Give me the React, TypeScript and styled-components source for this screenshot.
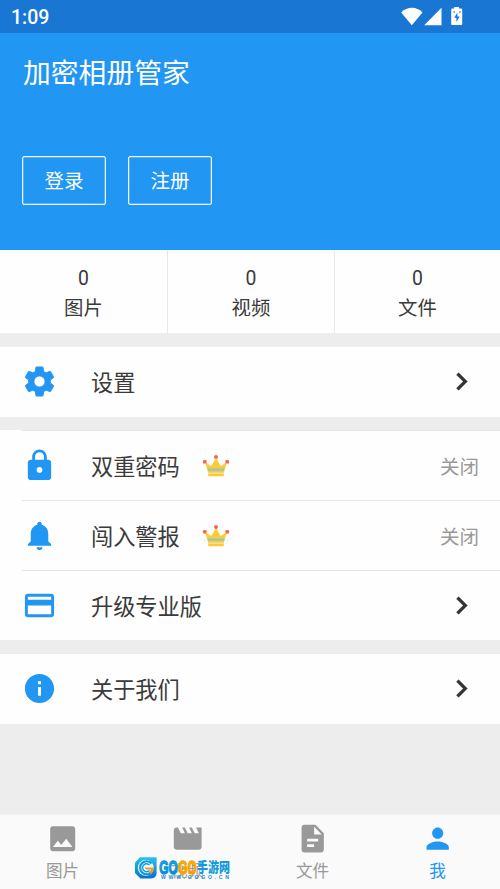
import React from "react";
import styled, { createGlobalStyle } from "styled-components";

const BLUE = "#2196f3";

const GlobalStyle = createGlobalStyle`
  * { box-sizing: border-box; }
  body {
    margin: 0;
    background: #ededed;
    font-family: Roboto, "Noto Sans CJK SC", sans-serif;
    color: #3a3a3a;
  }
`;

const Screen = styled.div`
  position: relative;
  width: 500px;
  height: 889px;
  display: flex;
  flex-direction: column;
  background: #ededed;
  overflow: hidden;
`;

const StatusBar = styled.div`
  height: 33px;
  flex: none;
  display: flex;
  justify-content: space-between;
  background: #1976d2;
  color: #fff;
  padding: 0 36px 0 11px;
`;

const Clock = styled.span`
  font-size: 19.5px;
  font-weight: 500;
  line-height: 35px;
`;

const Header = styled.header`
  height: 217px;
  flex: none;
  background: ${BLUE};
  color: #fff;
  padding: 21px 22px 0;
`;

const Title = styled.h1`
  margin: 0;
  padding-left: 1px;
  font-size: 27.8px;
  line-height: 40px;
  font-weight: 400;
`;

const Actions = styled.div`
  display: flex;
  gap: 22px;
  margin-top: 62px;
`;

const OutlineButton = styled.button`
  width: 84px;
  height: 49px;
  border: 1px solid #eef7fe;
  box-shadow: inset 0 0 0 0.5px rgba(255, 255, 255, 0.5);
  border-radius: 2px;
  background: transparent;
  color: #fff;
  font: 400 19.5px/46px Roboto, "Noto Sans CJK SC", sans-serif;
  padding: 2px 0 0;
`;

const Stats = styled.div`
  display: grid;
  grid-template-columns: 168px 167px 165px;
  height: 83px;
  flex: none;
  background: #fefefe;
  margin-bottom: 14px;
`;

const Stat = styled.div`
  display: flex;
  flex-direction: column;
  align-items: center;
  padding-top: 14px;
  font-size: 19.4px;
  line-height: 30px;
  &:not(:last-child) { border-right: 1px solid #e8e8e8; }
`;

const Group = styled.section<{ $lined?: boolean }>`
  background: #fefefe;
  flex: none;
  margin-bottom: ${(p) => (p.$lined ? 14 : 13)}px;
`;

const Row = styled.div<{ $divider?: boolean }>`
  height: 70px;
  margin-left: 22px;
  padding: 0 21px ${(p) => (p.$divider ? 0 : 1)}px 0;
  display: flex;
  align-items: center;
  border-top: ${(p) => (p.$divider ? "1px solid #e5e5e5" : "0")};
`;

const RowIcon = styled.span`
  display: flex;
  width: 69px;
  color: ${BLUE};
`;

const Label = styled.span`
  padding-top: 2px;
  font-size: 22.2px;
  line-height: 34px;
`;

const Crown = styled.svg`
  display: block;
  margin-left: 22px;
`;

const Trailing = styled.span`
  margin-left: auto;
  display: flex;
  color: #999;
  font-size: 19.5px;
  padding-bottom: 1px;
`;

const Chevron = styled(Trailing)`
  color: #333;
  padding-bottom: 0;
  stroke: #333;
  stroke-width: 0.35px;
`;

const NavBar = styled.nav`
  margin-top: auto;
  height: 74px;
  flex: none;
  display: grid;
  grid-template-columns: repeat(4, 1fr);
  background: #fafafa;
  box-shadow: 0 -1px 0 #f4f4f4;
`;

const NavItem = styled.div<{ $active?: boolean }>`
  display: flex;
  flex-direction: column;
  align-items: center;
  gap: 2px;
  padding-top: 7px;
  font-size: 16.6px;
  line-height: 30px;
  color: ${(p) => (p.$active ? BLUE : "#999")};
`;

const Watermark = styled.svg`
  position: absolute;
  left: 134px;
  top: 855px;
  overflow: visible;
`;

const paths = {
  settings:
    "M19.43 12.98c.04-.32.07-.64.07-.98s-.03-.66-.07-.98l2.11-1.65c.19-.15.24-.42.12-.64l-2-3.46c-.12-.22-.39-.3-.61-.22l-2.49 1c-.52-.4-1.08-.73-1.69-.98l-.38-2.65C14.46 2.18 14.25 2 14 2h-4c-.25 0-.46.18-.49.42l-.38 2.65c-.61.25-1.17.59-1.69.98l-2.49-1c-.23-.09-.49 0-.61.22l-2 3.46c-.13.22-.07.49.12.64l2.11 1.65c-.04.32-.07.65-.07.98s.03.66.07.98l-2.11 1.65c-.19.15-.24.42-.12.64l2 3.46c.12.22.39.3.61.22l2.49-1c.52.4 1.08.73 1.69.98l.38 2.65c.03.24.24.42.49.42h4c.25 0 .46-.18.49-.42l.38-2.65c.61-.25 1.17-.59 1.69-.98l2.49 1c.23.09.49 0 .61-.22l2-3.46c.12-.22.07-.49-.12-.64l-2.11-1.65zM12 15.8c-2.1 0-3.8-1.7-3.8-3.8s1.7-3.8 3.8-3.8 3.8 1.7 3.8 3.8-1.7 3.8-3.8 3.8z",
  lock: "M18 8h-1V6c0-2.76-2.24-5-5-5S7 3.24 7 6v2H6c-1.1 0-2 .9-2 2v10c0 1.1.9 2 2 2h12c1.1 0 2-.9 2-2V10c0-1.1-.9-2-2-2zm-6 9c-1.1 0-2-.9-2-2s.9-2 2-2 2 .9 2 2-.9 2-2 2zm3.1-9H8.9V6c0-1.71 1.39-3.1 3.1-3.1 1.71 0 3.1 1.39 3.1 3.1v2z",
  bell: "M12 22c1.1 0 2-.9 2-2h-4c0 1.1.89 2 2 2zm6-6v-5c0-3.07-1.64-5.64-4.5-6.32V4c0-.83-.67-1.5-1.5-1.5s-1.5.67-1.5 1.5v.68C7.63 5.36 6 7.92 6 11v5l-2 2v1h16v-1l-2-2z",
  card: "M20 4H4c-1.11 0-1.99.89-1.99 2L2 18c0 1.11.89 2 2 2h16c1.11 0 2-.89 2-2V6c0-1.11-.89-2-2-2zm0 14H4v-6h16v6zm0-10H4V6h16v2z",
  info: "M12 2C6.48 2 2 6.48 2 12s4.48 10 10 10 10-4.48 10-10S17.52 2 12 2zm1 15h-2v-6h2v6zm0-8h-2V7h2v2z",
  chevron: "M10 6L8.59 7.41 13.17 12l-4.58 4.59L10 18l6-6z",
  image:
    "M21 19V5c0-1.1-.9-2-2-2H5c-1.1 0-2 .9-2 2v14c0 1.1.9 2 2 2h14c1.1 0 2-.9 2-2zM8.5 13.5l2.5 3.01L14.5 12l4.5 6H5l3.5-4.5z",
  movie:
    "M18 4l2 4h-3l-2-4h-2l2 4h-3l-2-4H8l2 4H7L5 4H4c-1.1 0-1.99.9-1.99 2L2 18c0 1.1.9 2 2 2h16c1.1 0 2-.9 2-2V4h-4z",
  file: "M14 2H6c-1.1 0-1.99.9-1.99 2L4 20c0 1.1.89 2 1.99 2H18c1.1 0 2-.9 2-2V8l-6-6zm2 12H8v-2h8v2zm-3 4H8v-2h5v2zm0-9V3.5L18.500 9H13z",
  person:
    "M12 12c2.21 0 4-1.79 4-4s-1.79-4-4-4-4 1.79-4 4 1.79 4 4 4zm0 2c-2.67 0-8 1.34-8 4v2h16v-2c0-2.66-5.33-4-8-4z",
};

type IconName = keyof typeof paths;

const Icon = ({ name, size = 35 }: { name: IconName; size?: number }) => (
  <svg width={size} height={size} viewBox="0 0 24 24" fill="currentColor">
    <path
      d={paths[name]}
      fillRule="evenodd"
      stroke={name === "settings" ? "currentColor" : undefined}
      strokeWidth={name === "settings" ? 0.6 : undefined}
      strokeLinejoin="round"
    />
  </svg>
);

const CrownIcon = () => (
  <Crown width="28" height="24" viewBox="0 0 28 24">
    <path d="M3 8l6.200 3.900L14 4l4.800 7.900L25 8l-3.400 11.200H6.400z" fill="#ffca38" />
    <path d="M5.300 14.500h17.400l-.7 2.300H6z" fill="#8fcbc5" />
    <path d="M6.500 19h15" stroke="#fff0bd" strokeWidth=".7" />
    <rect x="6.200" y="19.400" width="15.600" height="2.800" rx=".5" fill="#ffca38" />
    <g fill="#f46b40">
      <circle cx="2.800" cy="7.800" r="2" />
      <circle cx="14" cy="2.900" r="2" />
      <circle cx="25.200" cy="7.800" r="2" />
    </g>
  </Crown>
);

const StatusIcons = () => (
  <svg width="64" height="33" viewBox="400 0 64 33" fill="#fff">
    <path d="M401.200 12.400C407.300 6.300 416.400 6.300 422.500 12.400L411.800 25.200z" />
    <path d="M441.500 7.800V25.200H424.200z" />
    <path
      fillRule="evenodd"
      d="M454.200 7h4.800v1.600h2.200q1 0 1 1V24q0 1-1 1h-9q-1 0-1-1V9.600q0-1 1-1h2zM457.400 12.500l-3.200 5.200h2.200v4.300l3.300-5.500h-2.300z"
    />
    <path d="M453.200 11.200l2 .2-1.200 2zM458.800 11.400l2-.2-.7 2.200z" fill="#1976d2" />
  </svg>
);

const SiteMark = () => (
  <Watermark width="98" height="27" viewBox="0 0 98 27">
    <defs>
      <linearGradient id="markBlue" x1="0" y1="0" x2="0" y2="1">
        <stop offset="0" stopColor="#25c4ed" />
        <stop offset="1" stopColor="#0872c9" />
      </linearGradient>
      <linearGradient id="markOrange" x1="0" y1="0" x2="0" y2="1">
        <stop offset="0" stopColor="#ffc400" />
        <stop offset="1" stopColor="#f78b00" />
      </linearGradient>
    </defs>
    <path d="M6 2.300h16.600V18q0 5.400-5.500 5.400H6.500L1 18V7.500z" fill="url(#markBlue)" />
    <circle cx="11.800" cy="12.800" r="8" fill="#e8faff" />
    <path d="M17.500 8.500a6.500 6.500 0 1 0 .2 8.300" fill="none" stroke="#159bdd" strokeWidth="2.200" />
    <path d="M15.500 10a4 4 0 1 0 0 5.500" fill="none" stroke="#159bdd" strokeWidth="1.400" />
    <path d="M10.500 12.500h9.500q0 4-3.500 6.200l-1-2.400q1.600-.7 1.500-1.700h-5z" fill="#f59b18" />
    <g fontFamily='"Liberation Sans", sans-serif' fontWeight="700" fontSize="19" strokeWidth="1.300">
      <text x="25.200" y="18.600" textLength="18.500" lengthAdjust="spacingAndGlyphs" fill="url(#markBlue)" stroke="#0c94db">GO</text>
      <text x="44.500" y="18.600" textLength="18" lengthAdjust="spacingAndGlyphs" fill="url(#markOrange)" stroke="#faa500">GO</text>
    </g>
    <text x="63" y="17" textLength="33" lengthAdjust="spacingAndGlyphs" fontFamily='"Noto Sans CJK SC", sans-serif' fontWeight="900" fontSize="14" fill="#149bdc">手游网</text>
    <text x="27" y="24.100" textLength="68" fontFamily='"Liberation Sans", sans-serif' fontWeight="700" fontSize="5.200" fill="#178fd2">WWW.GOGO.CN</text>
  </Watermark>
);

type RowProps = { icon: IconName; label: string; vip?: boolean; value?: string; divider?: boolean };

const MenuRow = ({ icon, label, vip, value, divider }: RowProps) => (
  <Row $divider={divider}>
    <RowIcon><Icon name={icon} /></RowIcon>
    <Label>{label}</Label>
    {vip && <CrownIcon />}
    {value ? <Trailing>{value}</Trailing> : <Chevron><Icon name="chevron" /></Chevron>}
  </Row>
);

const stats = ["图片", "视频", "文件"];
const tabs: { icon: IconName; label: string; active?: boolean }[] = [
  { icon: "image", label: "图片" },
  { icon: "movie", label: "视频" },
  { icon: "file", label: "文件" },
  { icon: "person", label: "我", active: true },
];

export default function App() {
  return (
    <>
      <GlobalStyle />
      <Screen>
        <StatusBar>
          <Clock>1:09</Clock>
          <StatusIcons />
        </StatusBar>
        <Header>
          <Title>加密相册管家</Title>
          <Actions>
            <OutlineButton>登录</OutlineButton>
            <OutlineButton>注册</OutlineButton>
          </Actions>
        </Header>
        <Stats>
          {stats.map((name) => (
            <Stat key={name}>
              <span>0</span>
              <span>{name}</span>
            </Stat>
          ))}
        </Stats>
        <Group>
          <MenuRow icon="settings" label="设置" />
        </Group>
        <Group $lined>
          <MenuRow icon="lock" label="双重密码" vip value="关闭" divider />
          <MenuRow icon="bell" label="闯入警报" vip value="关闭" divider />
          <MenuRow icon="card" label="升级专业版" divider />
        </Group>
        <Group>
          <MenuRow icon="info" label="关于我们" />
        </Group>
        <NavBar>
          {tabs.map((tab) => (
            <NavItem key={tab.label} $active={tab.active}>
              <Icon name={tab.icon} size={33.4} />
              <span>{tab.label}</span>
            </NavItem>
          ))}
        </NavBar>
        <SiteMark />
      </Screen>
    </>
  );
}
